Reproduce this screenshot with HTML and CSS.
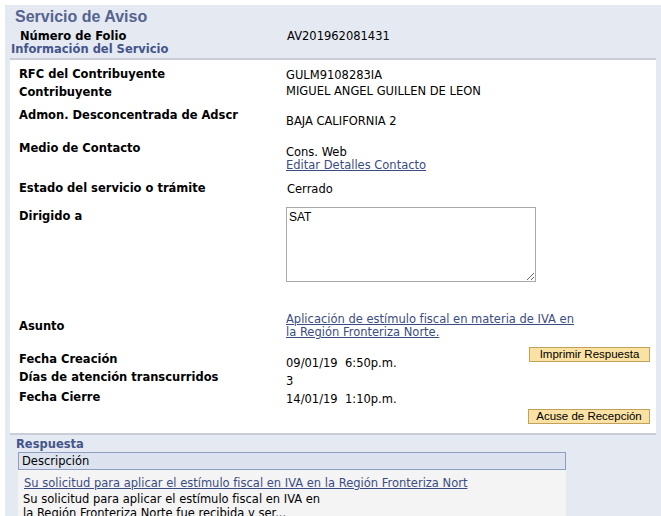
FILE: index.html
```html
<!DOCTYPE html>
<html lang="es">
<head>
    <meta charset="UTF-8">
    <title>Servicio de Aviso</title>
    <link rel="stylesheet" href="styles.css">
</head>
<body>
<div class="page">
    <h1 class="title">Servicio de Aviso</h1>
    <div class="folio">
        <span class="folio-label">Número de Folio</span>
        <span class="folio-value">AV201962081431</span>
    </div>
    <div class="section-title">Información del Servicio</div>

    <div class="box">
        <div class="row row-rfc">
            <div class="label">RFC del Contribuyente</div>
            <div class="value">GULM9108283IA</div>
        </div>
        <div class="row row-contrib">
            <div class="label">Contribuyente</div>
            <div class="value">MIGUEL ANGEL GUILLEN DE LEON</div>
        </div>
        <div class="row row-admon">
            <div class="label">Admon. Desconcentrada de Adscr</div>
            <div class="value">BAJA CALIFORNIA 2</div>
        </div>
        <div class="row row-medio">
            <div class="label">Medio de Contacto</div>
            <div class="value">Cons. Web<br><a href="#" class="link">Editar Detalles Contacto</a></div>
        </div>
        <div class="row row-estado">
            <div class="label">Estado del servicio o trámite</div>
            <div class="value">Cerrado</div>
        </div>
        <div class="row row-dirigido">
            <div class="label">Dirigido a</div>
            <div class="value"><textarea class="memo" readonly>SAT</textarea></div>
        </div>
        <div class="row row-asunto">
            <div class="label">Asunto</div>
            <div class="value"><a href="#" class="link">Aplicación de estímulo fiscal en materia de IVA en<br>la Región Fronteriza Norte.</a></div>
        </div>
        <div class="row row-creacion">
            <div class="label">Fecha Creación</div>
            <div class="value">09/01/19&nbsp;&nbsp;6:50p.m.</div>
            <div class="action"><button class="btn">Imprimir Respuesta</button></div>
        </div>
        <div class="row row-dias">
            <div class="label">Días de atención transcurridos</div>
            <div class="value">3</div>
        </div>
        <div class="row row-cierre">
            <div class="label">Fecha Cierre</div>
            <div class="value">14/01/19&nbsp;&nbsp;1:10p.m.</div>
        </div>
        <div class="row row-acuse">
            <div class="action"><button class="btn btn-wide">Acuse de Recepción</button></div>
        </div>
    </div>

    <div class="section-title resp-title">Respuesta</div>
    <div class="grid">
        <div class="grid-head">Descripción</div>
        <div class="grid-row">
            <a href="#" class="link">Su solicitud para aplicar el estímulo fiscal en IVA en la Región Fronteriza Nort</a>
            <p class="grid-text">Su solicitud para aplicar el estímulo fiscal en IVA en<br>la Región Fronteriza Norte fue recibida y ser...</p>
        </div>
    </div>
</div>
</body>
</html>
```

FILE: styles.css
```css
html, body {
    margin: 0;
    padding: 0;
    background: #ffffff;
}
body {
    font-family: "DejaVu Sans", Verdana, sans-serif;
    font-size: 11.5px;
    line-height: 13px;
    color: #000;
    overflow: hidden;
    height: 516px;
}
.page {
    margin: 5px 0 0 5px;
    padding: 2px 5px 0 0;
    background: #e5e9f1;
    height: 600px;
}
.title {
    margin: 0 0 0 10px;
    font-family: "Liberation Sans", Arial, sans-serif;
    font-size: 16px;
    line-height: 19px;
    font-weight: bold;
    color: #54638f;
}
.folio {
    display: flex;
    margin-top: 4px;
    padding-left: 15px;
}
.folio-label {
    width: 267px;
    font-weight: bold;
}
.section-title {
    margin-left: 6px;
    font-weight: bold;
    color: #44558c;
}
.box {
    margin: 2px 0 0 5px;
    background: #fff;
    border-top: 2px solid #c8cdd6;
    border-bottom: 2px solid #c8cdd6;
    padding: 6px 6px 9px 9px;
}
.row {
    display: flex;
    align-items: flex-start;
}
.label {
    width: 267px;
    flex: none;
    font-weight: bold;
}
.value {
    flex: 1;
}
.action {
    margin-left: auto;
}
.link {
    color: #3b4c82;
    text-decoration: underline;
}
.row-rfc { height: 18px; }
.row-rfc .label { padding-top: 2px; }
.row-rfc .value { padding-top: 3px; }
.row-contrib { height: 20px; }
.row-contrib .label { padding-top: 2px; }
.row-contrib .value { padding-top: 1px; }
.row-admon { height: 30px; }
.row-admon .label { padding-top: 5px; }
.row-admon .value { padding-top: 11px; }
.row-medio { height: 40px; }
.row-medio .label { padding-top: 8px; }
.row-medio .value { padding-top: 12px; }
.row-estado { height: 26px; }
.row-estado .label { padding-top: 8px; }
.row-estado .value { padding-top: 9px; padding-left: 1px; }
.row-dirigido { height: 104px; }
.row-dirigido .label { padding-top: 10px; }
.row-dirigido .value { padding-top: 7px; }
.memo {
    display: block;
    box-sizing: border-box;
    width: 250px;
    height: 75px;
    margin: 0;
    padding: 2px 2px;
    border: 1px solid #a9a9a9;
    font-family: "Liberation Sans", Arial, sans-serif;
    font-size: 12px;
    line-height: 14px;
    resize: both;
    outline: none;
}
.row-asunto { height: 36px; }
.row-asunto .label { padding-top: 16px; }
.row-asunto .value { padding-top: 9px; }
.row-creacion { height: 30px; }
.row-creacion .label { padding-top: 13px; }
.row-creacion .value { padding-top: 17px; }
.row-creacion .action { padding-top: 7px; }
.row-dias { height: 20px; }
.row-dias .label { padding-top: 1px; }
.row-dias .value { padding-top: 5px; }
.row-cierre { height: 19px; }
.row-cierre .label { padding-top: 1px; }
.row-cierre .value { padding-top: 3px; }
.btn {
    display: block;
    box-sizing: border-box;
    width: 121px;
    height: 15px;
    margin: 0;
    padding: 0;
    background: #fae2a4;
    border: 1px solid #c4a159;
    border-radius: 0;
    font-family: "Liberation Sans", Arial, sans-serif;
    font-size: 11.5px;
    line-height: 13px;
    color: #000;
}
.btn-wide {
    width: 122px;
}
.resp-title {
    margin: 3px 0 0 11px;
}
.grid {
    width: 548px;
    margin: 1px 0 0 13px;
}
.grid-head {
    height: 16px;
    padding-left: 3px;
    line-height: 17px;
    background: #dce3ef;
    border: 1px solid #8d9ec2;
}
.grid-row {
    background: #f4f4f4;
    padding: 7px 0 10px 5px;
    height: 60px;
}
.grid-row .link {
    display: block;
    padding-left: 1px;
}
.grid-text {
    margin: 2px 0 0 0;
    line-height: 14px;
}
```
